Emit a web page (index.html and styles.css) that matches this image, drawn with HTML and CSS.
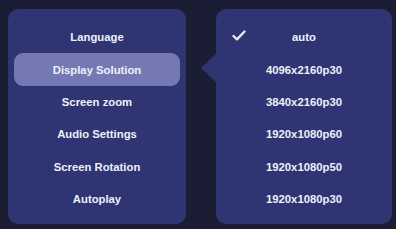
FILE: index.html
```html
<!DOCTYPE html>
<html lang="en">
<head>
    <meta charset="UTF-8">
    <meta name="viewport" content="width=device-width, initial-scale=1.0">
    <title>Settings</title>
    <link rel="stylesheet" href="styles.css">
</head>
<body>

<div class="screen">
    <div class="panel menu">
        <div class="item">Language</div>
        <div class="item active">Display Solution</div>
        <div class="item">Screen zoom</div>
        <div class="item">Audio Settings</div>
        <div class="item">Screen Rotation</div>
        <div class="item">Autoplay</div>
    </div>

    <div class="panel submenu">
        <span class="pointer"></span>
        <div class="item">
            <svg class="check" width="14" height="11" viewBox="0 0 14 11">
                <path d="M1.5 6 L5 9.3 L12.5 1.5" fill="none" stroke="#e8e9f5" stroke-width="2.4" stroke-linecap="round" stroke-linejoin="round"/>
            </svg>
            auto
        </div>
        <div class="item">4096x2160p30</div>
        <div class="item">3840x2160p30</div>
        <div class="item">1920x1080p60</div>
        <div class="item">1920x1080p50</div>
        <div class="item">1920x1080p30</div>
    </div>
</div>

</body>
</html>
```

FILE: styles.css
```css
body {
    margin: 0;
    background: #1a1d33;
    font-family: "Liberation Sans", Arial, sans-serif;
}
.screen {
    display: flex;
    gap: 30px;
    padding: 9px 0 0 8px;
    height: 229px;
    box-sizing: border-box;
}
.panel {
    position: relative;
    height: 215px;
    background: #2f3572;
    border-radius: 10px;
    padding: 12px 6px 0 6px;
    box-sizing: border-box;
}
.menu {
    width: 178px;
}
.submenu {
    width: 176px;
}
.item {
    position: relative;
    height: 32.4px;
    display: flex;
    align-items: center;
    justify-content: center;
    color: #eef0fa;
    font-size: 11.3px;
    font-weight: bold;
    border-radius: 9px;
}
.menu .item.active {
    background: #7479b3;
}
.check {
    position: absolute;
    left: 10px;
    top: 9px;
}
.pointer {
    position: absolute;
    left: -15px;
    top: 45px;
    width: 0;
    height: 0;
    border-top: 14px solid transparent;
    border-bottom: 14px solid transparent;
    border-right: 15px solid #2f3572;
}
```
